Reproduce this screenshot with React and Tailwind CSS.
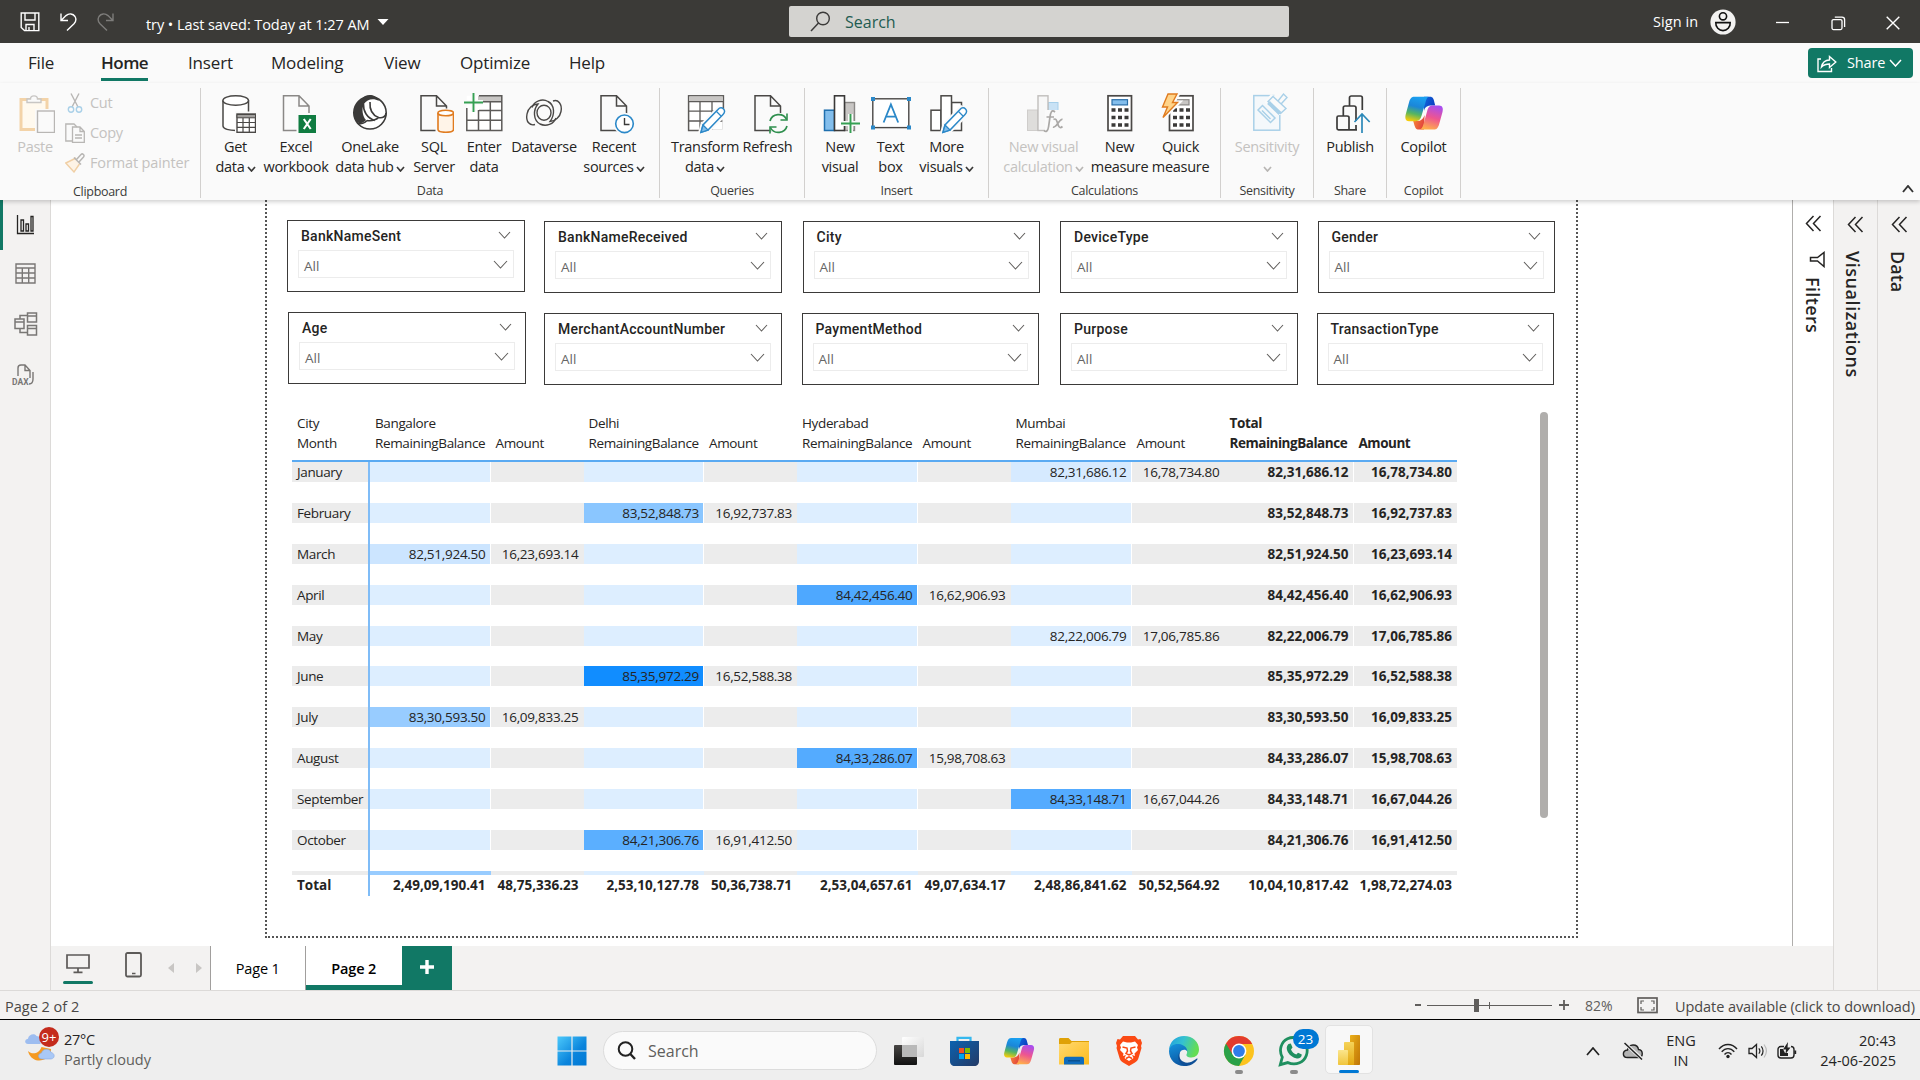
import React from "react";

/* ---------- shared drawing helpers ---------- */
const Svg = ({ w = 40, h = 40, vb, className = "", children }) => (
  <svg width={w} height={h} viewBox={vb || `0 0 ${w} ${h}`} fill="none" className={`shrink-0 ${className}`}>
    {children}
  </svg>
);

const Chevron = ({ w = 12, h = 7, stroke = "#333", sw = 1.3, dir = "down", className = "" }) => (
  <Svg w={w} h={h} className={className}>
    <path
      d={dir === "down" ? `M1 1L${w / 2} ${h - 1}L${w - 1} 1` : `M1 ${h - 1}L${w / 2} 1L${w - 1} ${h - 1}`}
      stroke={stroke}
      strokeWidth={sw}
    />
  </Svg>
);

const Page = () => (
  <path d="M7 2.8H22.5L32.5 13V37.5H7Z M22.5 2.8V13H32.5" fill="#fafafa" stroke="#4a4846" strokeWidth="1.5" />
);

const Pencil = () => (
  <g>
    <path d="M15 40L17.5 31.5L34 14.5L40.5 20.5L23.5 37.5Z" fill="#fafafa" stroke="#fafafa" strokeWidth="4" />
    <path d="M16 39.3L18 32L33 16.5C35 14.3 37 14.5 38.5 16C40 17.5 40 19.5 38 21.5L23 37Z" fill="#fff" stroke="#2b88c8" strokeWidth="1.5" />
    <path d="M16 39.3L18 32L23 37Z" fill="#83beec" stroke="#2b88c8" strokeWidth="1.3" />
    <path d="M31.5 18.5L36 23" stroke="#2b88c8" strokeWidth="1.2" />
  </g>
);

const CopilotMark = ({ size = 40, id }) => (
  <Svg w={size} h={size} vb="0 0 40 40">
    <defs>
      <linearGradient id={`${id}a`} x1="0.55" y1="0" x2="0.3" y2="1">
        <stop offset="0" stopColor="#1aa0f0" />
        <stop offset="0.4" stopColor="#1b86d8" />
        <stop offset="0.7" stopColor="#55b562" />
        <stop offset="1" stopColor="#f6cc0a" />
      </linearGradient>
      <linearGradient id={`${id}b`} x1="0.7" y1="0" x2="0.4" y2="1">
        <stop offset="0" stopColor="#a84df0" />
        <stop offset="0.5" stopColor="#ee5590" />
        <stop offset="1" stopColor="#ffb04a" />
      </linearGradient>
      <linearGradient id={`${id}c`} x1="0" y1="0" x2="1" y2="0.6">
        <stop offset="0" stopColor="#1168dc" />
        <stop offset="1" stopColor="#0a3bbf" />
      </linearGradient>
      <linearGradient id={`${id}d`} x1="0" y1="0" x2="1" y2="0.4">
        <stop offset="0" stopColor="#fa8b3a" />
        <stop offset="1" stopColor="#e2463c" />
      </linearGradient>
    </defs>
    <path d="M20 3.8H26C29 3.8 29.6 6 30.3 9L31.2 12.6H28C23 12.6 21 14 20 18Z" fill={`url(#${id}c)`} />
    <path d="M20 36.6H15C11.6 36.6 11 34 10.2 31.5L9.2 28H13C17 28 19 26 20.6 22Z" fill={`url(#${id}d)`} />
    <path d="M10.5 3.8H25.5C23 3.8 22.3 6.5 21.3 10L17.6 22.5C16.5 26.3 15 28.2 11.5 28.2H5C1.5 28.2 0.8 25 1.7 21.5L5 9.5C6.2 5.5 7.5 3.8 10.5 3.8Z" fill={`url(#${id}a)`} />
    <path d="M29.8 36.6H15C17.6 36.6 18.6 34 19.5 31L23.2 18C24.3 14.2 25.6 12.6 29 12.6H35C38.6 12.6 39.4 15.5 38.5 19L35.2 31C34 35 32.8 36.6 29.8 36.6Z" fill={`url(#${id}b)`} />
  </Svg>
);

/* ---------- ribbon icons, 40 x 40 each ---------- */
const icons = {
  paste: (
    <Svg>
      <rect x="6" y="6.5" width="26" height="30" fill="#fff9ee" stroke="#f3d3a8" strokeWidth="3" />
      <path d="M12 9.5V6H15.5C15.5 1.8 22.5 1.8 22.5 6H26V9.5Z" fill="#fafafa" stroke="#c8c6c4" strokeWidth="1.4" />
      <rect x="20" y="16" width="20" height="24" fill="#fafafa" />
      <rect x="22.5" y="18" width="17" height="21.5" fill="#fafafa" stroke="#b8b6b4" strokeWidth="1.4" />
    </Svg>
  ),
  getData: (
    <Svg>
      <path d="M7 7.5V33C7 39 32.5 39 32.5 33V7.5" fill="#fff" stroke="#4a4846" strokeWidth="1.5" />
      <ellipse cx="19.7" cy="7.5" rx="12.8" ry="4.8" fill="#fff" stroke="#4a4846" strokeWidth="1.5" />
      <rect x="19" y="18.5" width="22" height="22" fill="#fafafa" />
      <rect x="21" y="21" width="18.5" height="18.3" fill="#fff" stroke="#4a4846" strokeWidth="1.4" />
      <path d="M21 21.5H39.5V24.8H21Z" fill="#a19f9d" stroke="#4a4846" strokeWidth="1" />
      <path d="M21 29.5H39.5M21 34.4H39.5M27 25V39M33.3 25V39" stroke="#4a4846" strokeWidth="1.2" />
    </Svg>
  ),
  excel: (
    <Svg>
      <path d="M7.5 2.8H23L33 13V37.5H7.5Z M23 2.8V13H33" fill="#fafafa" stroke="#8a8886" strokeWidth="1.5" />
      <rect x="20.5" y="20" width="20" height="20" fill="#fafafa" />
      <rect x="22.5" y="22" width="17.5" height="18" fill="#107c41" />
      <path d="M27.8 26L34.7 36M34.7 26L27.8 36" stroke="#fff" strokeWidth="2.1" />
    </Svg>
  ),
  oneLake: (
    <Svg>
      <circle cx="20" cy="19.8" r="16.2" fill="#fff" stroke="#3b3a39" strokeWidth="1.6" />
      <path d="M12 6C15 0.5 26 0.5 29 8C23 4.5 17 6.5 14 11C11 16 13 24 16 27C11 32 8 30 6 28C1.5 20 4 10 12 6Z" fill="#3b3a39" />
      <path d="M13.5 11C13 18 17 25 25 27.5M20 9C19.5 16 22 22 28.5 24.5C33 25.5 36 23 36 20M17 27.5C22 28.5 27 26.5 29 24M7 30C11 31.5 15 30 17 27.5" stroke="#3b3a39" strokeWidth="1.6" />
    </Svg>
  ),
  sql: (
    <Svg>
      <Page />
      <rect x="21.5" y="15.5" width="20" height="25" fill="#fafafa" />
      <path d="M24 20V36.5C24 40.2 39.5 40.2 39.5 36.5V20" fill="#fff4e8" stroke="#e07b1f" strokeWidth="1.6" />
      <ellipse cx="31.7" cy="20" rx="7.8" ry="2.7" fill="#fff" stroke="#e07b1f" strokeWidth="1.6" />
    </Svg>
  ),
  enterData: (
    <Svg>
      <rect x="2.8" y="2.8" width="35" height="34.8" fill="#fff" />
      <rect x="14" y="2.8" width="24" height="6" fill="#c8c6c4" />
      <path d="M15 2.8H37.8V37.6H2.8V15M15 8.8H37.8M15 17.6H37.8M2.8 27.3H37.8M14.5 17V37.6M26.3 8.8V37.6" stroke="#5c5a58" strokeWidth="1.5" />
      <path d="M0 9.5H19M9.5 0V19" stroke="#fafafa" strokeWidth="5" />
      <path d="M0 9.5H19M9.5 0V19" stroke="#35a053" strokeWidth="1.9" />
    </Svg>
  ),
  dataverse: (
    <Svg>
      <ellipse cx="20" cy="19.7" rx="7" ry="7.5" stroke="#4a4846" strokeWidth="1.4" />
      <path d="M32 25C30 31 22 34 16 31C9 27 9 17 14 11C9 11 4 15 3 21C1.5 29 6 33 11 31.5" stroke="#4a4846" strokeWidth="1.4" />
      <path d="M8 14.5C10 8.5 18 5 24 8.5C31 12 31 22 26 28.5C31 28.5 36 24 37 18.5C38.5 11 34 6 29 8" stroke="#4a4846" strokeWidth="1.4" />
    </Svg>
  ),
  recent: (
    <Svg className="overflow-visible">
      <Page />
      <circle cx="30.5" cy="30.8" r="11" fill="#fafafa" />
      <circle cx="30.5" cy="30.8" r="8.8" fill="#fff" stroke="#2b88c8" strokeWidth="1.6" />
      <path d="M30.5 25V31.5H35.5" stroke="#3b3a39" strokeWidth="1.4" />
    </Svg>
  ),
  transform: (
    <Svg className="overflow-visible">
      <rect x="3.6" y="2.8" width="34.8" height="34.7" fill="#fff" stroke="#5c5a58" strokeWidth="1.5" />
      <rect x="4.2" y="3.4" width="33.6" height="4.8" fill="#c8c6c4" />
      <path d="M3.6 8.6H38.4M3.6 18.2H38.4M3.6 28H38.4M15 8.6V37.5M27 8.6V37.5" stroke="#5c5a58" strokeWidth="1.3" />
      <path d="M39.4 22V39M22 38.6H39" stroke="#fafafa" strokeWidth="4" />
      <Pencil />
    </Svg>
  ),
  refresh: (
    <Svg className="overflow-visible">
      <Page />
      <circle cx="30.5" cy="30.5" r="10.7" fill="#fafafa" />
      <path d="M22 28C24 20.5 35 19 38.6 26.5M39 33C37 40.5 26 42 22.4 34.5" stroke="#2f8f4e" strokeWidth="1.7" />
      <path d="M39 20.5V27H32.5M22 40.5V34H28.5" stroke="#2f8f4e" strokeWidth="1.6" />
    </Svg>
  ),
  newVisual: (
    <Svg>
      <rect x="4.5" y="17.2" width="10" height="20.3" fill="#83beec" stroke="#1f6fae" strokeWidth="1.5" />
      <rect x="24.5" y="9.5" width="10" height="28" fill="#c8c6c4" stroke="#8a8886" strokeWidth="1.4" />
      <rect x="14.5" y="2.8" width="10" height="34.7" fill="#fff" stroke="#3b3a39" strokeWidth="1.6" />
      <path d="M21 30.5H40M30.5 21V40" stroke="#fafafa" strokeWidth="5" />
      <path d="M21 30.5H40M30.5 21V40" stroke="#35a053" strokeWidth="1.9" />
    </Svg>
  ),
  textBox: (
    <Svg>
      <rect x="1.8" y="5.8" width="36" height="28.8" fill="#fff" stroke="#4a4846" strokeWidth="1.4" />
      <path d="M0 4H4V8H0ZM36 4H40V8H36ZM0 32.5H4V36.5H0ZM36 32.5H40V36.5H36Z" fill="#2b88c8" />
      <path d="M12.6 29.5L19.9 11.5L27.2 29.5M15 23.6H24.8" stroke="#2b88c8" strokeWidth="1.8" />
    </Svg>
  ),
  moreVisuals: (
    <Svg className="overflow-visible">
      <rect x="4" y="17.2" width="10" height="20.3" fill="#fff" stroke="#4a4846" strokeWidth="1.5" />
      <rect x="24.5" y="9.5" width="10" height="28" fill="#fff" stroke="#4a4846" strokeWidth="1.5" />
      <rect x="14" y="2.8" width="10.5" height="34.7" fill="#fff" stroke="#4a4846" strokeWidth="1.5" />
      <Pencil />
    </Svg>
  ),
  visualCalc: (
    <Svg>
      <rect x="3.5" y="17" width="10" height="20.5" fill="#dedddb" stroke="#cfcdcb" />
      <rect x="24.5" y="9.5" width="9.5" height="11" fill="#c9e2f5" stroke="#a6cfea" />
      <rect x="14" y="2.8" width="10" height="34.7" fill="#f7f7f7" stroke="#c0bebc" strokeWidth="1.4" />
      <rect x="21" y="17" width="19" height="22" fill="#fafafa" />
      <path d="M31 19C27.5 16 26.5 20 26 24L24.5 34C24 38 22 39.5 20 37.5M22.5 24H30M29.5 26.5C32 25 32.5 27 33.5 30C34.5 33.5 35.5 36 38.5 33.5M38.5 26.5C35.5 25.5 32.5 35.5 29 34" stroke="#aaa8a6" strokeWidth="1.7" />
    </Svg>
  ),
  measure: (
    <Svg>
      <rect x="8" y="2.8" width="23.5" height="34.7" fill="#fff" stroke="#4a4846" strokeWidth="1.7" />
      <rect x="12" y="6.7" width="15.5" height="5.2" fill="#83beec" stroke="#2b6fa8" strokeWidth="1.2" />
      <path d="M11.5 17H28.5M11.5 24.5H28.5M11.5 32H28.5" stroke="#3b3a39" strokeWidth="3.6" strokeDasharray="4 2.5" />
    </Svg>
  ),
  quick: (
    <Svg>
      <rect x="8.5" y="2.8" width="23.5" height="34.7" fill="#fff" stroke="#4a4846" strokeWidth="1.7" />
      <rect x="14" y="6.7" width="14" height="5.2" fill="#c8c6c4" stroke="#8a8886" strokeWidth="1.2" />
      <path d="M12 17H29M12 24.5H29M12 32H29" stroke="#3b3a39" strokeWidth="3.6" strokeDasharray="4 2.5" />
      <path d="M7 1H17L12 9.5H17.5L2 25L6.5 14H1.5Z" fill="#fafafa" stroke="#fafafa" strokeWidth="4" />
      <path d="M7 1H16L11.5 9.5H16.5L2 24.5L6.5 14H1.5Z" fill="#ffd48a" stroke="#e07b1f" strokeWidth="1.4" />
    </Svg>
  ),
  sensitivity: (
    <Svg className="overflow-visible">
      <rect x="6.800" y="2.6" width="26" height="34.6" fill="#f4f8fb" stroke="#a9d0e8" strokeWidth="1.5" />
      <path d="M11 17L15.500 12.5L28 25L23.500 29.5Z M15 17.500L23.500 26" stroke="#a9d0e8" strokeWidth="1.5" />
      <path d="M20 9L24.500 3.500L28 5.500L30.500 0.500L33 3.500L36 0L39.500 3.500L35.500 8L40.500 14L34 20L29.500 20Z" fill="#fafafa" stroke="#fafafa" strokeWidth="4" />
      <path d="M21 8.500L26 3.500L39 15.500L33.500 20.500ZM31 8L36.500 1L40 4.500L34.500 10.500" fill="#fafafa" stroke="#a9d0e8" strokeWidth="1.4" />
      <path d="M21.500 9.500L33 20.500" stroke="#a9d0e8" strokeWidth="4" />
    </Svg>
  ),
  publish: (
    <Svg className="overflow-visible">
      <path d="M27 36.8H8.5C7.5 36.8 7 36.3 7 35.3V24.5C7 23.5 7.5 23 8.5 23H17C18.5 23 19 23.5 19 24.5V36.8M13.3 23V14.8C13.3 13.7 14 13 15 13H24C25 13 26 13.7 26 14.8V28M19.5 13V4.8C19.5 3.7 20.2 3 21.2 3H30.5C31.5 3 32.3 3.7 32.3 4.8V17M26 32V37" stroke="#3b3a39" strokeWidth="1.7" />
      <path d="M32 40V21.5M24.5 29L32 21L39.7 29" stroke="#2b88b8" strokeWidth="1.7" />
    </Svg>
  ),
  copilot: <CopilotMark id="rib" />,
};

/* ---------- title bar and menu ---------- */
function TitleBar() {
  return (
    <header className="flex h-[43px] items-center bg-[#3b3a37] text-white">
      <Svg w={20} h={20} className="ml-[20px]">
        <path d="M1.2 1H18.8V18.6H4.5L1.2 15.5Z M5 1V8H15V1 M6 18.5V12.5H14V18.5 M9 18V15" stroke="#fff" strokeWidth="1.4" />
      </Svg>
      <Svg w={17} h={18} className="ml-[20px]">
        <path d="M1 0.5V7.5H8M1.3 7.2L6 2.6C9 0 13 0.5 15 3.5C16.5 6 16 8.5 14 10.8L7 17.5" stroke="#fff" strokeWidth="1.4" />
      </Svg>
      <Svg w={17} h={18} className="ml-[20px]">
        <path d="M16 0.5V7.5H9M15.7 7.2L11 2.6C8 0 4 0.5 2 3.5C0.5 6 1 8.5 3 10.8L10 17.5" stroke="#7d7c7a" strokeWidth="1.4" />
      </Svg>
      <span className="ml-[32px] w-[225px] whitespace-nowrap pt-[7px] text-[14.5px] tracking-[-0.005em]">try • Last saved: Today at 1:27 AM</span>
      <Svg w={12} h={6} className="ml-[6px]">
        <path d="M0.5 0H11.5L6 6Z" fill="#fff" />
      </Svg>
      <div className="ml-[400px] flex h-[31px] w-[500px] items-center rounded-[2px] bg-[#d4d3d0] pl-[21px]">
        <Svg w={21} h={21}>
          <circle cx="13" cy="7.5" r="6.3" stroke="#3b3a39" strokeWidth="1.4" />
          <path d="M8.5 12L1 20" stroke="#3b3a39" strokeWidth="1.5" />
        </Svg>
        <span className="ml-[14px] text-[16px] text-[#1f5c50]">Search</span>
      </div>
      <span className="ml-[364px] w-[48px] whitespace-nowrap text-[14.5px] tracking-[0.005em]">Sign in</span>
      <Svg w={26} h={26} className="ml-[9px]">
        <circle cx="13" cy="13" r="12.6" fill="#f3f2f1" />
        <circle cx="13" cy="7.3" r="3.6" stroke="#111" strokeWidth="1.6" />
        <path d="M5.8 13.6H20.2C20.6 18 17 21.6 13 21.6C9 21.6 5.4 18 5.8 13.6Z" stroke="#111" strokeWidth="1.6" />
      </Svg>
      <Svg w={14} h={14} className="ml-[40px]">
        <path d="M0 7.5H13" stroke="#fff" strokeWidth="1.3" />
      </Svg>
      <Svg w={15} h={15} className="ml-[41px] mt-[3px]">
        <rect x="1" y="3.6" width="10" height="10" rx="1.5" stroke="#fff" strokeWidth="1.3" />
        <path d="M3.8 1.2H11C13 1.2 13.6 2 13.6 3.8V11" stroke="#fff" strokeWidth="1.3" />
      </Svg>
      <Svg w={14} h={14} className="ml-[40px] mt-[3px]">
        <path d="M0.7 0.7L13.3 13.3M13.3 0.7L0.7 13.3" stroke="#fff" strokeWidth="1.4" />
      </Svg>
    </header>
  );
}

const menu = [
  ["File", "ml-[28px] w-[73px]"],
  ["Home", "w-[87px]"],
  ["Insert", "w-[83px]"],
  ["Modeling", "w-[113px]"],
  ["View", "w-[76px]"],
  ["Optimize", "w-[109px]"],
  ["Help", "w-[60px]"],
];

function MenuBar() {
  return (
    <nav className="flex h-[40px] items-start bg-[#fafafa] text-[17px] tracking-[-0.01em] text-[#252423]">
      {menu.map(([t, c]) => (
        <div key={t} className={`flex ${c}`}>
          {t === "Home" ? (
            <span className="h-[38px] border-b-[3px] border-[#117865] pt-[7px] font-semibold leading-[26px] tracking-[-0.03em]">{t}</span>
          ) : (
            <span className="pt-[7px] leading-[26px]">{t}</span>
          )}
        </div>
      ))}
      <button className="ml-auto mr-[7px] mt-[5px] flex h-[30px] w-[105px] items-center rounded-[4px] bg-[#117865] pl-[9px] text-white">
        <Svg w={20} h={20}>
          <path d="M4 6H1V18.5H14.5V15M4.5 14C5.5 9 9 7 12.5 7V3.5L18.8 9L12.5 14.5V11C9.5 11 7 11.5 4.5 14Z" stroke="#fff" strokeWidth="1.4" />
        </Svg>
        <span className="ml-[10px] w-[38px] text-[14.5px]">Share</span>
        <Chevron w={13} h={8} stroke="#fff" sw={1.5} className="ml-[4px]" />
      </button>
    </nav>
  );
}

/* ---------- ribbon ---------- */
const groups = [
  {
    name: "Data",
    cls: "w-[458px] pl-[9px]",
    items: [
      ["getData", "Get", "data", "w-[51px]", 1],
      ["excel", "Excel", "workbook", "w-[70px]"],
      ["oneLake", "OneLake", "data hub", "w-[78px]", 1],
      ["sql", "SQL", "Server", "w-[50px]"],
      ["enterData", "Enter", "data", "w-[50px]"],
      ["dataverse", "Dataverse", "", "w-[70px]"],
      ["recent", "Recent", "sources", "w-[70px]", 1],
    ],
  },
  {
    name: "Queries",
    cls: "w-[144px] pl-[10px]",
    items: [
      ["transform", "Transform", "data", "w-[70px]", 1],
      ["refresh", "Refresh", "", "w-[55px]"],
    ],
  },
  {
    name: "Insert",
    cls: "w-[183px] pl-[10px]",
    items: [
      ["newVisual", "New", "visual", "w-[50px]"],
      ["textBox", "Text", "box", "w-[51px]"],
      ["moreVisuals", "More", "visuals", "w-[61px]", 1],
    ],
  },
  {
    name: "Calculations",
    cls: "w-[231px] pl-[9px]",
    items: [
      ["visualCalc", "New visual", "calculation", "w-[91px]", 1, 1],
      ["measure", "New", "measure", "w-[61px]"],
      ["quick", "Quick", "measure", "w-[61px]"],
    ],
  },
  { name: "Sensitivity", cls: "w-[92px] pl-[8px]", items: [["sensitivity", "Sensitivity", "", "w-[76px]", 1, 1]] },
  { name: "Share", cls: "w-[72px] pl-[1px]", items: [["publish", "Publish", "", "w-[70px]"]] },
  { name: "Copilot", cls: "w-[73px] pl-[1px]", items: [["copilot", "Copilot", "", "w-[71px]"]] },
];

function RibbonButton({ item }) {
  const [icon, l1, l2, w, arrow, dim] = item;
  return (
    <div className={`flex shrink-0 flex-col items-center whitespace-nowrap leading-[20px] ${w} ${dim ? "text-[#c4c2c0]" : "text-[#252423]"}`}>
      <div className="flex h-[44px] items-start">{icons[icon]}</div>
      <span>{l1}</span>
      <span className="flex h-[20px] items-center gap-[2px]">
        {l2}
        {arrow && <Chevron w={9} h={6} sw={1.7} stroke={dim ? "#b8b6b4" : "#3b3a39"} className="mt-[3px]" />}
      </span>
    </div>
  );
}

function Ribbon() {
  return (
    <section className="relative z-10 flex h-[117px] bg-[#fafafa] pt-[5px] text-[14.5px] tracking-[-0.02em] shadow-[0_2px_4px_rgba(0,0,0,0.18)]">
      <div className="flex h-[110px] w-[201px] flex-col border-r border-[#d2d0ce]">
        <div className="flex h-[93px]">
          <div className="flex w-[40px] flex-col items-center pl-[30px] pt-[5px] leading-[20px] text-[#c4c2c0]">
            <div className="h-[44px]">{icons.paste}</div>
            <span>Paste</span>
          </div>
          <div className="ml-[25px] flex flex-col whitespace-nowrap text-[#c4c2c0]">
            <div className="flex h-[30px] items-center">
              <Svg w={20} h={20}>
                <path d="M6 0.5L13 14M14 0.5L7 14" stroke="#b8b6b4" strokeWidth="1.4" />
                <circle cx="6" cy="16.5" r="2.7" stroke="#a9d0e8" strokeWidth="1.4" />
                <circle cx="14" cy="16.5" r="2.7" stroke="#a9d0e8" strokeWidth="1.4" />
              </Svg>
              <span className="ml-[5px]">Cut</span>
            </div>
            <div className="flex h-[30px] items-center">
              <Svg w={20} h={20}>
                <path d="M8 18H0.8V1H9L12 4" stroke="#b8b6b4" strokeWidth="1.3" />
                <path d="M7.5 4H15L19.3 8.5V19.3H7.5Z M15 4V8.5H19M10 12H17M10 15H17" stroke="#b8b6b4" strokeWidth="1.3" />
              </Svg>
              <span className="ml-[5px]">Copy</span>
            </div>
            <div className="flex h-[30px] items-center">
              <Svg w={20} h={20}>
                <path d="M11 5L6 7.5L0.8 10L9 19L14.5 11" fill="#fdf3e6" stroke="#f0cfa5" strokeWidth="1.4" />
                <path d="M9 4.5L16 11.5M11.5 6.5L16 1.5C17.5 0 20 2 18.5 4L14 9" stroke="#b8b6b4" strokeWidth="1.5" />
              </Svg>
              <span className="ml-[5px] tracking-[-0.01em]">Format painter</span>
            </div>
          </div>
        </div>
        <span className="pt-[3px] text-center text-[12.5px] leading-[21px] text-[#3b3a39]">Clipboard</span>
      </div>
      {groups.map((g) => (
        <div key={g.name} className="flex h-[110px] flex-col border-r border-[#d2d0ce]">
          <div className={`flex h-[93px] pt-[5px] ${g.cls}`}>
            {g.items.map((it) => (
              <RibbonButton key={it[0]} item={it} />
            ))}
          </div>
          <span className="pt-[3px] text-center text-[12.5px] leading-[21px] text-[#3b3a39]">{g.name}</span>
        </div>
      ))}
      <Chevron w={12} h={8} dir="up" sw={1.9} className="ml-auto mr-[6px] mt-[97px]" />
    </section>
  );
}

/* ---------- slicers ---------- */
const slicerRows = [
  [
    ["BankNameSent", "ml-[20px]"],
    ["BankNameReceived", "ml-[19.5px] mt-px"],
    ["City", "ml-[21px] mt-px"],
    ["DeviceType", "ml-[20px] mt-px"],
    ["Gender", "ml-[20px] mt-px"],
  ],
  [
    ["Age", "ml-[21px]"],
    ["MerchantAccountNumber", "ml-[18.5px] mt-px"],
    ["PaymentMethod", "ml-[20px] mt-px"],
    ["Purpose", "ml-[21px] mt-px"],
    ["TransactionType", "ml-[19px] mt-px"],
  ],
];

function Slicer({ name, cls }) {
  return (
    <div className={`h-[72px] w-[237.5px] shrink-0 border border-[#3b3a39] px-[10px] pt-[4px] ${cls}`}>
      <div className="flex h-[22px] items-center justify-between pl-[3px] pr-[2px]">
        <span className="pt-[1px] font-['Roboto'] text-[14px] font-medium tracking-[0.018em] text-[#252423]">{name}</span>
        <Chevron w={13} h={8} stroke="#605e5c" sw={1.1} className="relative top-[-1px] mr-[1px]" />
      </div>
      <div className="mt-[3px] flex h-[28px] items-center justify-between border border-[#ececec] pl-[5px] pr-[5px]">
        <span className="pt-[4px] text-[13.5px] text-[#666]">All</span>
        <Chevron w={15} h={9} stroke="#605e5c" sw={1.1} className="mt-[1px]" />
      </div>
    </div>
  );
}

/* ---------- matrix ---------- */
const matrixCols = "grid grid-cols-[78px_120.5px_93px_120.5px_93px_120.5px_93px_121px_93px_129px_103.5px]";
const cities = ["Bangalore", "Delhi", "Hyderabad", "Mumbai"];
const data = [
  ["January", 3, "82,31,686.12", "16,78,734.80", "bg-[#d6eaff]"],
  ["February", 1, "83,52,848.73", "16,92,737.83", "bg-[#8ac6ff]"],
  ["March", 0, "82,51,924.50", "16,23,693.14", "bg-[#cce5ff]"],
  ["April", 2, "84,42,456.40", "16,62,906.93", "bg-[#4ea8ff]"],
  ["May", 3, "82,22,006.79", "17,06,785.86", "bg-[#ddeeff]"],
  ["June", 1, "85,35,972.29", "16,52,588.38", "bg-[#118dff]"],
  ["July", 0, "83,30,593.50", "16,09,833.25", "bg-[#98ccff]"],
  ["August", 2, "84,33,286.07", "15,98,708.63", "bg-[#54abff]"],
  ["September", 3, "84,33,148.71", "16,67,044.26", "bg-[#54abff]"],
  ["October", 1, "84,21,306.76", "16,91,412.50", "bg-[#5bafff]"],
];
const totals = [
  "2,49,09,190.41", "48,75,336.23", "2,53,10,127.78", "50,36,738.71", "2,53,04,657.61",
  "49,07,634.17", "2,48,86,841.62", "50,52,564.92", "10,04,10,817.42", "1,98,72,274.03",
];

function Matrix() {
  return (
    <div className="w-[1165px] whitespace-nowrap text-[13.5px] tracking-[-0.027em] text-[#252423]">
      <div className={`${matrixCols} leading-[20px]`}>
        <span className="pl-[5px]">City</span>
        {cities.map((c) => (
          <span key={c} className="col-span-2 pl-[5px]">{c}</span>
        ))}
        <span className="col-span-2 pl-[5px] font-bold">Total</span>
        <span className="pl-[5px]">Month</span>
        {cities.map((c) => (
          <React.Fragment key={c}>
            <span className="pl-[5px]">RemainingBalance</span>
            <span className="pl-[5px]">Amount</span>
          </React.Fragment>
        ))}
        <span className="pl-[5px] font-bold tracking-[-0.035em]">RemainingBalance</span>
        <span className="pl-[5px] font-bold tracking-[-0.035em]">Amount</span>
      </div>
      <div className="mt-[7px] border-t-2 border-[#5aaaf2]">
        {data.map(([m, city, rb, am, color]) => (
          <div key={m} className={`${matrixCols} h-[40.9px] leading-[20px]`}>
            <span className="border-r-2 border-[#7fbcf7]">
              <span className="block h-[20px] bg-[#ececec] pl-[5px]">{m}</span>
            </span>
            {cities.map((c, i) => (
              <React.Fragment key={c}>
                <span className={`mr-px h-[20px] pr-[4px] text-right tracking-[-0.02em] ${i === city ? color : "bg-[#ddeeff]"}`}>{i === city ? rb : ""}</span>
                <span className="h-[20px] bg-[#ececec] pr-[5px] text-right tracking-[-0.02em]">{i === city ? am : ""}</span>
              </React.Fragment>
            ))}
            <span className="mr-px h-[20px] bg-[#ececec] pr-[4px] text-right font-bold tracking-[0em]">{rb}</span>
            <span className="h-[20px] bg-[#ececec] pr-[5px] text-right font-bold tracking-[0em]">{am}</span>
          </div>
        ))}
        <div className={`${matrixCols} h-[4px]`}>
          <span className="border-r-2 border-[#7fbcf7] bg-[#ececec]" />
          {cities.map((c, i) => (
            <React.Fragment key={c}>
              <span className={i === 0 ? "bg-[#98ccff]" : "bg-[#ddeeff]"} />
              <span className="bg-[#ececec]" />
            </React.Fragment>
          ))}
          <span className="bg-[#ececec]" />
          <span className="bg-[#ececec]" />
        </div>
        <div className={`${matrixCols} h-[20px] font-bold leading-[21px] tracking-[0em]`}>
          <span className="border-r-2 border-[#7fbcf7] pl-[5px]">Total</span>
          {totals.map((t, i) => (
            <span key={i} className="pr-[5px] text-right">{t}</span>
          ))}
        </div>
      </div>
    </div>
  );
}

/* ---------- side rails ---------- */
function LeftRail() {
  return (
    <aside className="flex w-[51px] flex-col border-r border-[#dcdad8] bg-[#f3f2f1]">
      <div className="flex h-[50px] items-center border-l-[3px] border-[#117865] pl-[13px]">
        <Svg w={19} h={22}>
          <path d="M1.5 1V19.500H18M5 17V6H7.5V17ZM10 17V10H12.5V17ZM15 17V2.5H17V17Z" stroke="#252423" strokeWidth="1.3" />
        </Svg>
      </div>
      <Svg w={21} h={21} className="ml-[15px] mt-[13px]">
        <path d="M1 1H20V20H1ZM1 5H20M1 10H20M1 15H20M7.3 5V20M13.7 5V20" stroke="#797775" strokeWidth="1.4" />
      </Svg>
      <Svg w={24} h={24} className="ml-[14px] mt-[28px]">
        <path d="M1 7H10V16.5H1ZM1 10H10M13.5 1H22.5V10H13.5ZM13.5 4H22.5M13.5 13.5H22.5V23H13.5ZM13.5 16.5H22.5M6 7V3.5H13.5M6 16.5V20.5H13.5" stroke="#797775" strokeWidth="1.5" />
      </Svg>
      <Svg w={24} h={22} className="ml-[12px] mt-[28px]">
        <path d="M6 12V4C6 2 7 1 9 1H13L18 6.5V14M13 1V6.5H18M21 8V15C21 18 19.5 20 17 20" stroke="#797775" strokeWidth="1.4" />
        <text x="0" y="21" className="font-['Roboto']" fontSize="8.5" fontWeight="700" fill="#797775">DAX</text>
      </Svg>
    </aside>
  );
}

const DoubleChevron = ({ className = "" }) => (
  <Svg w={17} h={17} className={className}>
    <path d="M8.5 1L1.5 8.5L8.5 16M15.5 1L8.5 8.5L15.5 16" stroke="#252423" strokeWidth="1.5" />
  </Svg>
);

/* ---------- canvas ---------- */
function Canvas() {
  return (
    <main className="flex min-w-0 flex-1 bg-white pl-[214px]">
      <div className="h-[738px] w-[1313px] border-x-2 border-b-2 border-dotted border-[#555] pt-[20px]">
        <div className="flex">{slicerRows[0].map(([n, c]) => <Slicer key={n} name={n} cls={c} />)}</div>
        <div className="mt-[19px] flex">{slicerRows[1].map(([n, c]) => <Slicer key={n} name={n} cls={c} />)}</div>
        <div className="mt-[27px] flex items-start">
          <div className="ml-[25px] mt-[1px]"><Matrix /></div>
          <div className="ml-[83px] h-[406px] w-[8px] rounded-full bg-[#b0aeac]" />
        </div>
      </div>
    </main>
  );
}

function PageTabs() {
  return (
    <footer className="flex h-[44px] bg-[#f3f2f1] text-[14.5px]">
      <div className="ml-[12px] flex w-[30px] flex-col items-center">
        <Svg w={24} h={20} className="mt-[8px]">
          <path d="M1 1H23V14H1ZM12 14V18M7.5 18.3H16.5" stroke="#5c5a58" strokeWidth="1.7" />
        </Svg>
        <div className="mt-[7px] h-[3px] w-[30px] rounded bg-[#117865]" />
      </div>
      <Svg w={17} h={26} className="ml-[32px] mt-[6px]">
        <rect x="1" y="1" width="15" height="23.5" rx="1.5" stroke="#5c5a58" strokeWidth="1.8" />
        <path d="M7 21.5H10.5" stroke="#5c5a58" strokeWidth="1.5" />
      </Svg>
      <Svg w={6} h={10} className="ml-[26px] mt-[17px]"><path d="M6 0V10L0 5Z" fill="#c8c6c4" /></Svg>
      <Svg w={6} h={10} className="ml-[22px] mt-[17px]"><path d="M0 0V10L6 5Z" fill="#c8c6c4" /></Svg>
      <div className="ml-[8px] flex w-[95.5px] items-center justify-center border-x border-[#a19f9d] bg-white pt-[2px] tracking-[-0.01em]">Page 1</div>
      <div className="flex w-[96.5px] items-center justify-center border-b-[5px] border-[#117865] bg-white pt-[7px] font-semibold tracking-[-0.01em]">Page 2</div>
      <div className="flex w-[50px] items-center justify-center bg-[#117865] pb-[2px]">
        <Svg w={14} h={14}><path d="M0 7H14M7 0V14" stroke="#fff" strokeWidth="3.4" /></Svg>
      </div>
    </footer>
  );
}

function StatusBar() {
  return (
    <div className="flex h-[29px] items-center border-t border-[#dcdad8] bg-[#f3f2f1] text-[14.5px] text-[#4a4846]">
      <span className="pl-[5px] pt-[4px]">Page 2 of 2</span>
      <span className="ml-auto h-[2px] w-[6px] bg-[#605e5c]" />
      <div className="ml-[6px] flex h-[13px] w-[125px] items-center">
        <span className="h-px w-[47px] bg-[#605e5c]" />
        <span className="h-[13px] w-[5px] bg-[#605e5c]" />
        <span className="h-px w-[10px] bg-[#605e5c]" />
        <span className="h-[7px] w-px bg-[#605e5c]" />
        <span className="h-px flex-1 bg-[#605e5c]" />
      </div>
      <Svg w={10} h={10} className="ml-[7px]"><path d="M0 5H10M5 0V10" stroke="#605e5c" strokeWidth="1.8" /></Svg>
      <span className="ml-[16px] w-[52px] text-[14px] text-[#605e5c]">82%</span>
      <Svg w={21} h={17} className="mt-[1px]">
        <rect x="1" y="1" width="19" height="14.5" stroke="#605e5c" strokeWidth="1.7" />
        <path d="M4 7V4H7M14 4H17V7M17 10V13H14M7 13H4V10" stroke="#605e5c" strokeWidth="1.2" />
      </Svg>
      <span className="ml-[17px] mr-[5px] w-[240px] whitespace-nowrap pt-[4px] tracking-[-0.005em]">Update available (click to download)</span>
    </div>
  );
}

/* ---------- taskbar ---------- */
const taskIcons = [
  <Svg w={32} h={32} key="tv">
    <defs>
      <linearGradient id="tvd" x1="0" y1="0" x2="0" y2="1"><stop offset="0" stopColor="#484644" /><stop offset="1" stopColor="#111" /></linearGradient>
      <linearGradient id="tvl" x1="0" y1="0" x2="1" y2="1"><stop offset="0" stopColor="#fff" /><stop offset="1" stopColor="#d8d8d8" /></linearGradient>
    </defs>
    <rect x="1" y="10" width="23" height="20" rx="1" fill="url(#tvd)" />
    <rect x="9" y="2" width="22" height="20" rx="1" fill="url(#tvl)" />
    <rect x="9" y="10" width="15" height="12" fill="#b9b9b9" />
  </Svg>,
  <Svg w={32} h={32} key="st">
    <defs><linearGradient id="stg" x1="0" y1="0" x2="1" y2="1"><stop offset="0" stopColor="#0b62b0" /><stop offset="1" stopColor="#243a66" /></linearGradient></defs>
    <path d="M9.5 7V2.8H22.5V7" stroke="#35b8ee" strokeWidth="2.2" />
    <path d="M2 6H31V26C31 29.5 29 31 26.5 31H6.5C4 31 2 29.5 2 26Z" fill="url(#stg)" />
    <path d="M11 13H16V18H11Z" fill="#f25022" /><path d="M17 13H22V18H17Z" fill="#7fba00" />
    <path d="M11 19H16V24H11Z" fill="#00a4ef" /><path d="M17 19H22V24H17Z" fill="#ffb900" />
  </Svg>,
  <CopilotMark size={32} id="tb" key="cp" />,
  <Svg w={32} h={32} key="fe">
    <defs><linearGradient id="feg" x1="0" y1="0" x2="1" y2="1"><stop offset="0" stopColor="#ffd970" /><stop offset="1" stopColor="#fdbb1c" /></linearGradient></defs>
    <path d="M1 4.5C1 3.5 1.5 3 2.5 3H10.5L13.5 6H31V10H1Z" fill="#dfa106" />
    <path d="M1 9H12L14 7H31V29.5H1Z" fill="url(#feg)" />
    <path d="M6 29.5V24C6 22.5 7 21.8 8 21.8H24C25.5 21.8 26 22.5 26 24V29.5Z" fill="#0f6cbd" />
    <path d="M10 25.8H22" stroke="#0a4f8c" strokeWidth="1.4" />
  </Svg>,
  <Svg w={32} h={32} key="br">
    <path d="M10 1H22L25 4.5L27.5 4L29 8L28 11L28.5 13L25.5 23C25 25 24 26 22 27.5L16 31L10 27.5C8 26 7 25 6.5 23L3.5 13L4 11L3 8L4.5 4L7 4.5Z" fill="#fb4a14" />
    <path d="M7 10L10 6.5L14 7.5H18L22 6.5L25 10L24 12.5L25 15L21.5 18.5L22 21L19 20L20.5 23L16 26L11.5 23L13 20L10 21L10.5 18.5L7 15L8 12.5Z" fill="#fff" />
    <path d="M9.5 12L14 13L14.5 16L13 18.5L16 20L19 18.5L17.5 16L18 13L22.5 12M13 23.5L16 21.8L19 23.5" stroke="#fb4a14" strokeWidth="1.5" />
  </Svg>,
  <Svg w={32} h={32} key="ed">
    <defs>
      <linearGradient id="eg1" x1="0" y1="0" x2="1" y2="0.3"><stop offset="0" stopColor="#1f9ee0" /><stop offset="0.5" stopColor="#35c1d0" /><stop offset="1" stopColor="#63dd55" /></linearGradient>
      <linearGradient id="eg2" x1="0" y1="0" x2="0.3" y2="1"><stop offset="0" stopColor="#1593dd" /><stop offset="1" stopColor="#0c59a4" /></linearGradient>
    </defs>
    <path d="M1 15C1.5 6.500 8 1 16 1C25 1 31 7 31 14.500C31 19.500 27.500 22.500 23.500 22.500C19.500 22.500 18 20.800 18.500 19.500C20 17 19 13 14 11.500C9 10 3 11 1 15Z" fill="url(#eg1)" />
    <path d="M1 16C1.500 11 6 8.500 11 9C16 9.600 19.500 13 19.300 16.500C18 14 13 14 11.500 18.500C10 24 14 29.500 20 30.400C10 33 1 26 1 16Z" fill="url(#eg2)" />
    <path d="M12 17C9.500 24 15 28.500 21 27.500C25 26.800 27 24.500 28.800 23.500C29.500 23.200 29.800 23.600 29.300 24.500C26.500 29 21.500 31.300 17 30.900C11 29 8 21.500 12 17Z" fill="#0e4f96" />
  </Svg>,
  <Svg w={32} h={32} key="ch">
    <circle cx="16" cy="16" r="15" fill="#fcc31e" />
    <path d="M3 8.500A15 15 0 0 0 16 31L22.500 19.500L16 16Z" fill="#2aa148" />
    <path d="M3 8.500A15 15 0 0 1 29.200 9H16L9.500 19.500Z" fill="#e33b2e" />
    <circle cx="16" cy="16" r="7.400" fill="#fff" />
    <circle cx="16" cy="16" r="5.900" fill="#2f7de9" />
  </Svg>,
  <Svg w={32} h={32} key="wa">
    <path d="M2.300 29.700L4.300 22.300C0.500 15.500 3 7 9.500 3.800C16 0.800 24.500 3.300 28 10C31 17 28 25 21.500 27.800C17.500 29.500 13.500 29.200 9.800 27.600Z" fill="#eee" stroke="#1f8f5f" strokeWidth="2.800" />
    <path d="M10.500 9L12.800 8.500L14.500 12.500L13 14.500C14 17 16 18.800 18.300 19.600L20 17.800L23.800 19.500C23.800 23 20.500 24 18 23.300C13 22 9.500 18 8.800 14C8.500 12 9.300 10 10.500 9Z" fill="#1f8f5f" />
  </Svg>,
];

function WeatherIcon() {
  return (
    <Svg w={36} h={36}>
      <path d="M4 24C8 28 15 27 17.500 20L27 22C27 30 20 34 14 33.500C9 33 5 29 4 24Z" fill="#f59a22" />
      <path d="M4 17C0.500 17 0 12.500 4 11.800C4.500 7 11 6 12.500 9C16 9 17 12 16.500 17Z" fill="#9dbdf0" />
      <path d="M18 32C13.500 32 13.500 26.500 17.500 26C18.500 21 26 21 27 25.500C31 26 31.500 31.500 27 32Z" fill="#a9c8f6" stroke="#86aae4" strokeWidth="0.600" />
      <circle cx="25" cy="10" r="10" fill="#c42b1c" />
      <text x="25" y="14.500" textAnchor="middle" fontSize="13" fill="#fff" className="font-['Open_Sans']">9+</text>
    </Svg>
  );
}

function Taskbar() {
  return (
    <div className="flex h-[61px] items-start border-t border-black bg-[#eeeeee] text-[14.5px] text-[#252423]">
      <div className="ml-[24px] mt-[7px] flex w-[533px]">
        <WeatherIcon />
        <div className="ml-[4px] mt-[3px] whitespace-nowrap leading-[20px]">
          <div className="tracking-[-0.02em]">27°C</div>
          <div className="text-[#605e5c]">Partly cloudy</div>
        </div>
      </div>
      <Svg w={30} h={30} className="mt-[16px]">
        <defs><linearGradient id="wing" x1="0" y1="0" x2="1" y2="1"><stop offset="0" stopColor="#4cc9fb" /><stop offset="0.6" stopColor="#0a84dc" /><stop offset="1" stopColor="#0078d4" /></linearGradient></defs>
        <path d="M0.500 0.500H14.400V14.400H0.500ZM15.600 0.500H29.500V14.400H15.600ZM0.500 15.600H14.400V29.500H0.500ZM15.600 15.600H29.500V29.500H15.600Z" fill="url(#wing)" />
      </Svg>
      <div className="ml-[16px] mt-[11px] flex h-[39px] w-[274px] items-center rounded-full border border-[#dcdcdc] bg-[#fafafa] pl-[13px]">
        <Svg w={19} h={19}>
          <circle cx="8.500" cy="8" r="6.800" stroke="#222" strokeWidth="2" />
          <path d="M13.300 13L18 18" stroke="#222" strokeWidth="2.400" />
        </Svg>
        <span className="ml-[12px] text-[16px] text-[#605e5c]">Search</span>
      </div>
      <div className="ml-[4.5px] flex">
        {taskIcons.map((ic, i) => (
          <div key={i} className="relative flex w-[55px] flex-col items-center pt-[15px]">
            {ic}
            {i > 5 && <span className="mt-[3px] h-[4px] w-[8px] rounded-full bg-[#8a8a8a]" />}
            {i === 7 && (
              <span className="absolute left-[26px] top-[9px] flex h-[20px] w-[26px] items-center justify-center rounded-full bg-[#0078d4] text-[13.5px] text-white">23</span>
            )}
          </div>
        ))}
        <div className="ml-[3px] mt-[5px] flex h-[49px] w-[48px] flex-col items-center rounded-[5px] border border-[#e2e2e2] bg-[#f8f8f8] pt-[8px]">
          <Svg w={24} h={32}>
            <defs>
              <linearGradient id="pb1" x1="0" y1="0" x2="1" y2="1"><stop offset="0" stopColor="#ebb01a" /><stop offset="1" stopColor="#bf7406" /></linearGradient>
              <linearGradient id="pb2" x1="0" y1="0" x2="0" y2="1"><stop offset="0" stopColor="#f5d35a" /><stop offset="1" stopColor="#e3a70f" /></linearGradient>
              <linearGradient id="pb3" x1="0" y1="0" x2="0" y2="1"><stop offset="0" stopColor="#fbe58c" /><stop offset="1" stopColor="#f0c53c" /></linearGradient>
            </defs>
            <rect x="13" y="1" width="10" height="30" rx="0.700" fill="url(#pb1)" />
            <rect x="7" y="8" width="10" height="23" rx="0.700" fill="url(#pb2)" />
            <rect x="1" y="16" width="10" height="15" rx="0.700" fill="url(#pb3)" />
          </Svg>
          <span className="mt-[4px] h-[4px] w-[20px] rounded-full bg-[#0078d4]" />
        </div>
      </div>
      <div className="ml-auto mt-[11px] flex h-[40px] items-center">
        <Chevron w={14} h={9} dir="up" sw={1.7} stroke="#222" />
        <Svg w={22} h={18} className="ml-[22px]">
          <path d="M5.500 15.500C0 15.500 0 8.500 5.500 8C6.500 1.500 15.500 1.500 16.500 7.500C21.500 8 21.500 15.500 16.500 15.500Z" fill="#b4b4b4" stroke="#222" strokeWidth="1.400" />
          <path d="M2 0.500L20 17" stroke="#eee" strokeWidth="3.500" />
          <path d="M2.500 1L20 17.500" stroke="#222" strokeWidth="1.500" />
        </Svg>
        <div className="ml-[21px] flex w-[32px] flex-col items-center leading-[20px]"><span>ENG</span><span>IN</span></div>
        <Svg w={20} h={16} className="ml-[21px]">
          <path d="M1 6C6 0 14 0 19 6M3.700 8.800C7.500 4.500 12.500 4.500 16.300 8.800M6.500 11.500C8.500 9 11.500 9 13.500 11.500" stroke="#222" strokeWidth="1.400" />
          <circle cx="10" cy="13.500" r="1.700" fill="#222" />
        </Svg>
        <Svg w={20} h={16} className="ml-[10px]">
          <path d="M1 5.500H4L8.500 1.500V14.500L4 10.500H1Z" stroke="#222" strokeWidth="1.300" />
          <path d="M10.800 5.300C12.200 7 12.200 9 10.800 10.700M13.300 3.300C15.600 6 15.600 10 13.300 12.700" stroke="#222" strokeWidth="1.200" />
          <path d="M16 1.500C19 5.500 19 10.500 16 14.500" stroke="#bbb" strokeWidth="1.200" />
        </Svg>
        <Svg w={20} h={18} className="ml-[9px]">
          <path d="M7 4.500H4C2 4.500 1 5.500 1 7.500V13C1 15 2 16 4 16H14C16 16 17 15 17 13V7.500C17 5.500 16 4.500 14 4.500M18.500 8.500V12" stroke="#222" strokeWidth="1.400" />
          <path d="M3 7H6L8 11H11V14H3Z" fill="#222" />
          <path d="M11 0L6 7.500H9L8.500 12L13.500 5.500H10.500Z" fill="#222" />
        </Svg>
        <div className="ml-[15px] mr-[24px] w-[84px] whitespace-nowrap text-right leading-[20px]"><div>20:43</div><div>24-06-2025</div></div>
      </div>
    </div>
  );
}

export default function App() {
  return (
    <div className="flex h-[1080px] w-[1920px] flex-col overflow-hidden bg-[#f3f2f1] font-['Open_Sans','Noto_Sans',sans-serif]">
      <TitleBar />
      <MenuBar />
      <Ribbon />
      <div className="flex h-[790px]">
        <LeftRail />
        <div className="flex w-[1782px] flex-col">
          <div className="flex h-[746px]">
            <Canvas />
            <div className="flex w-[41px] flex-col items-center border-l border-[#b0aeac] bg-white">
              <DoubleChevron className="mt-[15px]" />
              <Svg w={16} h={17} className="ml-[7px] mt-[19px]">
                <path d="M15 1.500V15.500L8.500 10H1.500V6.500H8.500Z" stroke="#252423" strokeWidth="1.500" />
              </Svg>
              <span className="mt-[9px] text-[18px] font-semibold leading-[20px] tracking-[0.02em] text-[#252423] [writing-mode:vertical-rl]">Filters</span>
            </div>
          </div>
          <PageTabs />
        </div>
        <div className="flex w-[44px] flex-col items-center border-l border-[#dcdad8]">
          <DoubleChevron className="mt-[16px]" />
          <span className="mr-[5px] mt-[18px] text-[18px] font-semibold leading-[20px] tracking-[0.03em] text-[#252423] [writing-mode:vertical-rl]">Visualizations</span>
        </div>
        <div className="flex flex-1 flex-col items-center border-l border-[#dcdad8]">
          <DoubleChevron className="mt-[16px]" />
          <span className="mr-[3px] mt-[18px] text-[18px] font-semibold leading-[20px] text-[#252423] [writing-mode:vertical-rl]">Data</span>
        </div>
      </div>
      <StatusBar />
      <Taskbar />
    </div>
  );
}
